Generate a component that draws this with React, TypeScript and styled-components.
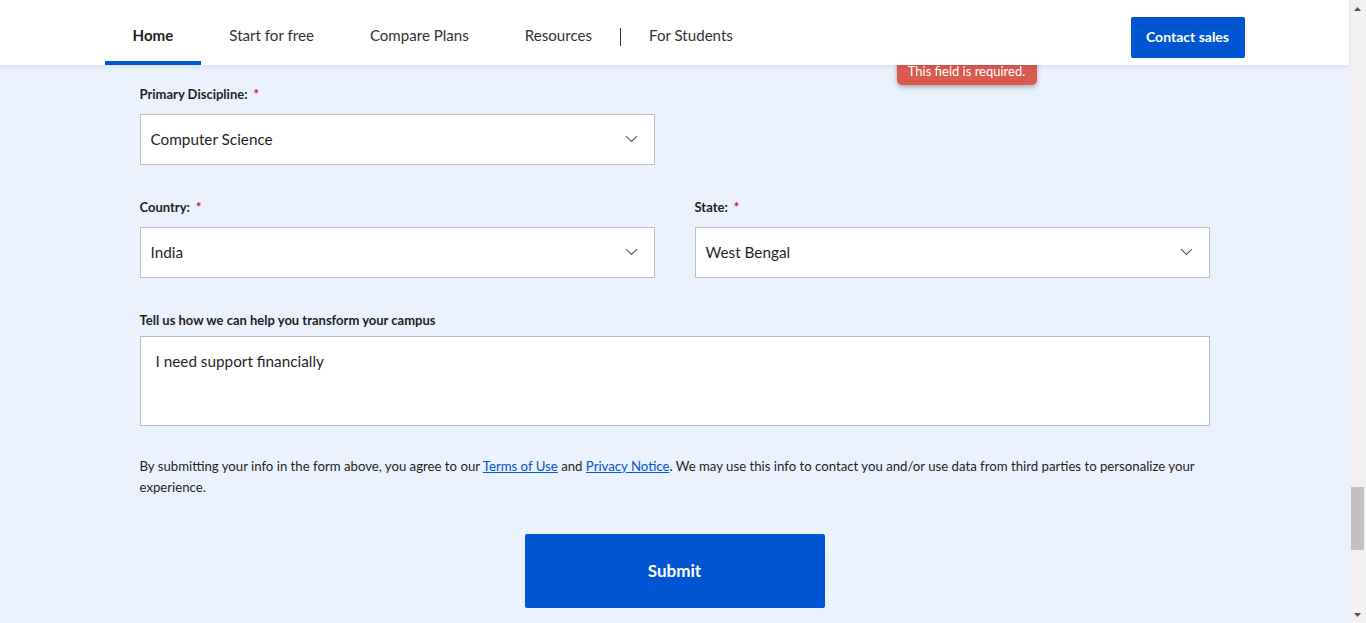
import React from "react";
import styled, { createGlobalStyle } from "styled-components";

const Global = createGlobalStyle`
  html, body { margin: 0; padding: 0; height: 100%; overflow: hidden; }
  body { font-family: "Source Sans Pro", Lato, "Liberation Sans", sans-serif; color: #1f1f1f; }
  * { box-sizing: border-box; }
`;

const Shell = styled.div`
  display: flex;
  height: 623px;
  width: 1366px;
  background: #ebf2fd;
`;

const Main = styled.div`
  flex: 1;
  display: flex;
  flex-direction: column;
  min-width: 0;
`;

const Header = styled.header`
  height: 65px;
  background: #fff;
  box-shadow: 0 2px 4px rgba(0, 0, 0, 0.07);
  position: relative;
  z-index: 2;
  flex-shrink: 0;
`;

const HeaderInner = styled.div`
  width: 1140px;
  margin: 0 auto;
  height: 100%;
  display: flex;
  align-items: stretch;
  justify-content: space-between;
`;

const Nav = styled.nav`
  display: flex;
  align-items: stretch;
`;

const NavItem = styled.a<{ $active?: boolean }>`
  display: flex;
  align-items: center;
  padding: 8px 28px 0;
  font-size: 15.1px;
  color: ${(p) => (p.$active ? "#1f1f1f" : "#333")};
  font-weight: ${(p) => (p.$active ? 700 : 400)};
  text-decoration: none;
  border-bottom: 4px solid ${(p) => (p.$active ? "#0056d2" : "transparent")};
`;

const Divider = styled.span`
  width: 1px;
  height: 18px;
  background: #333;
  align-self: center;
  margin-top: 9px;
`;

const ContactButton = styled.button`
  align-self: center;
  width: 114px;
  height: 41px;
  border: none;
  border-radius: 2px;
  background: #0056d2;
  color: #fff;
  font-family: inherit;
  font-weight: 700;
  font-size: 14px;
  margin-top: 10px;
  padding: 0 0 2px;
`;

const Content = styled.div`
  width: 1070px;
  margin: 0 auto;
  position: relative;
  padding-top: 20px;
`;

const Tooltip = styled.div`
  position: absolute;
  left: 757px;
  top: -8px;
  width: 140px;
  height: 28px;
  background: #d95a4e;
  color: #fff;
  font-size: 13px;
  border-radius: 5px;
  box-shadow: 0 2px 5px rgba(0, 0, 0, 0.3);
  display: flex;
  align-items: flex-end;
  justify-content: center;
  padding-bottom: 6px;
  z-index: 1;
`;

const Row = styled.div<{ $mt?: number }>`
  display: grid;
  grid-template-columns: 515px 515px;
  column-gap: 40px;
  margin-top: ${(p) => p.$mt ?? 0}px;
`;

const Field = styled.div<{ $gap: number }>`
  display: flex;
  flex-direction: column;
  gap: ${(p) => p.$gap}px;
`;

const Label = styled.label`
  font-size: 13px;
  font-weight: 700;
  line-height: 18px;
  color: #1f1f1f;
`;

const Req = styled.span`
  color: #c8102e;
  margin-left: 6px;
`;

const SelectBox = styled.div`
  height: 51px;
  background: #fff;
  border: 1px solid #bdbdbd;
  display: flex;
  align-items: center;
  justify-content: space-between;
  padding: 0 16px 1px 10px;
  font-size: 15.3px;
  color: #1f1f1f;
`;

const TextArea = styled.div`
  height: 90px;
  background: #fff;
  border: 1px solid #bdbdbd;
  padding: 14px 15px;
  font-size: 15.3px;
  color: #1f1f1f;
  line-height: 20px;
`;

const FullField = styled(Field)<{ $mt: number }>`
  margin-top: ${(p) => p.$mt}px;
`;

const Disclaimer = styled.p`
  margin: 30px 0 0;
  font-size: 13.2px;
  line-height: 21px;
  color: #1f1f1f;
`;

const Link = styled.a`
  color: #0056d2;
  text-decoration: underline;
`;

const SubmitWrap = styled.div`
  display: flex;
  justify-content: center;
  margin-top: 36px;
`;

const Submit = styled.button`
  width: 300px;
  height: 74px;
  background: #0056d2;
  color: #fff;
  border: none;
  border-radius: 2px;
  font-family: inherit;
  font-weight: 700;
  font-size: 17px;
  padding: 0 0 2px;
`;

const Scrollbar = styled.div`
  width: 17px;
  background: #f1f1f1;
  display: flex;
  flex-direction: column;
  align-items: center;
`;

const ScrollBtn = styled.div`
  height: 17px;
  width: 17px;
  display: flex;
  align-items: center;
  justify-content: center;
`;

const Track = styled.div`
  flex: 1;
  width: 100%;
  display: flex;
  justify-content: center;
`;

const Thumb = styled.div`
  width: 13px;
  height: 63px;
  margin-top: 470px;
  background: #c1c1c1;
`;

const Chevron = () => (
  <svg width="13" height="8" viewBox="0 0 13 8">
    <path d="M1 1.2 L6.5 6.5 L12 1.2" fill="none" stroke="#555" strokeWidth="1.1" />
  </svg>
);

const Select = ({ value }: { value: string }) => (
  <SelectBox>
    <span>{value}</span>
    <Chevron />
  </SelectBox>
);

export default function App() {
  return (
    <>
      <Global />
      <Shell>
        <Main>
          <Header>
            <HeaderInner>
              <Nav>
                <NavItem $active>Home</NavItem>
                <NavItem>Start for free</NavItem>
                <NavItem>Compare Plans</NavItem>
                <NavItem>Resources</NavItem>
                <Divider />
                <NavItem>For Students</NavItem>
              </Nav>
              <ContactButton>Contact sales</ContactButton>
            </HeaderInner>
          </Header>
          <Content>
            <Tooltip>This field is required.</Tooltip>
            <Row>
              <Field $gap={11}>
                <Label>
                  Primary Discipline:<Req>*</Req>
                </Label>
                <Select value="Computer Science" />
              </Field>
            </Row>
            <Row $mt={33}>
              <Field $gap={11}>
                <Label>
                  Country:<Req>*</Req>
                </Label>
                <Select value="India" />
              </Field>
              <Field $gap={11}>
                <Label>
                  State:<Req>*</Req>
                </Label>
                <Select value="West Bengal" />
              </Field>
            </Row>
            <FullField $gap={7} $mt={33}>
              <Label>Tell us how we can help you transform your campus</Label>
              <TextArea>I need support financially</TextArea>
            </FullField>
            <Disclaimer>
              By submitting your info in the form above, you agree to our <Link>Terms of Use</Link> and{" "}
              <Link>Privacy Notice</Link>. We may use this info to contact you and/or use data from third
              parties to personalize your experience.
            </Disclaimer>
            <SubmitWrap>
              <Submit>Submit</Submit>
            </SubmitWrap>
          </Content>
        </Main>
        <Scrollbar>
          <ScrollBtn>
            <svg width="7" height="4" viewBox="0 0 7 4">
              <path d="M0 4 L3.5 0 L7 4 Z" fill="#505050" />
            </svg>
          </ScrollBtn>
          <Track>
            <Thumb />
          </Track>
          <ScrollBtn>
            <svg width="7" height="4" viewBox="0 0 7 4">
              <path d="M0 0 L3.5 4 L7 0 Z" fill="#505050" />
            </svg>
          </ScrollBtn>
        </Scrollbar>
      </Shell>
    </>
  );
}
